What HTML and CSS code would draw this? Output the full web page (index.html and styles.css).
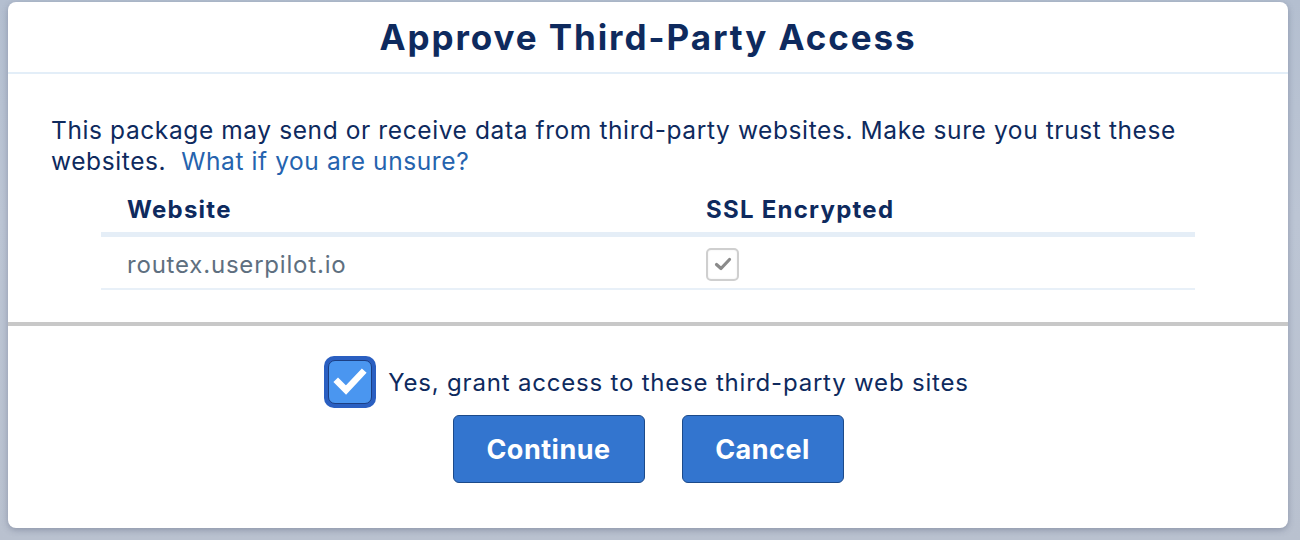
FILE: index.html
```html
<!DOCTYPE html>
<html lang="en">
<head>
<meta charset="utf-8">
<title>Approve Third-Party Access</title>
<link rel="stylesheet" href="styles.css">
</head>
<body>
<div class="page">
  <div class="dialog">
    <div class="dialog-header">
      <h1 class="title">Approve Third-Party Access</h1>
    </div>
    <div class="dialog-body">
      <p class="intro"><span>This package may send or receive data from third-party websites. Make sure you trust these websites.</span> &nbsp;<a class="link" href="#">What if you are unsure?</a></p>
      <table class="sites">
        <thead>
          <tr><th class="col-site">Website</th><th class="col-ssl">SSL Encrypted</th></tr>
        </thead>
        <tbody>
          <tr>
            <td class="col-site site-name">routex.userpilot.io</td>
            <td class="col-ssl">
              <span class="ssl-box">
                <svg width="22" height="22" viewBox="0 0 22 22"><polyline points="4.5,11.5 9,15.5 17.5,6.5" fill="none" stroke="#8a8a8a" stroke-width="3.2" stroke-linecap="round" stroke-linejoin="round"/></svg>
              </span>
            </td>
          </tr>
        </tbody>
      </table>
    </div>
    <div class="dialog-footer">
      <label class="grant">
        <span class="grant-box">
          <span class="grant-inner">
            <svg width="36" height="36" viewBox="0 0 36 36"><polyline points="6,18 14,26 30,9" fill="none" stroke="#ffffff" stroke-width="6.5" stroke-linecap="square" stroke-linejoin="miter"/></svg>
          </span>
        </span>
        <span class="grant-text">Yes, grant access to these third-party web sites</span>
      </label>
      <div class="buttons">
        <button class="btn btn-continue">Continue</button>
        <button class="btn btn-cancel">Cancel</button>
      </div>
    </div>
  </div>
</div>
</body>
</html>
```
FILE: styles.css
```css
html, body {
  margin: 0;
  padding: 0;
}
body {
  background: linear-gradient(180deg, #b4bfd0 0%, #bcc5d4 40%, #b9c1cf 100%);
  font-family: Inter, "Liberation Sans", Arial, sans-serif;
  width: 1300px;
  height: 540px;
  overflow: hidden;
}
.page {
  padding: 2px 12px 0 8px;
}
.dialog {
  width: 1280px;
  height: 526px;
  background: #ffffff;
  border-radius: 8px;
  box-shadow: 0 2px 6px rgba(60, 70, 100, 0.35);
  display: flex;
  flex-direction: column;
  overflow: hidden;
}
.dialog-header {
  height: 70px;
  border-bottom: 2px solid #e3eef8;
  display: flex;
  align-items: center;
  justify-content: center;
}
.title {
  margin: 0;
  font-size: 35px;
  font-weight: 700;
  color: #0e2a5e;
  letter-spacing: 1.9px;
  padding-top: 0;
}
.dialog-body {
  padding: 41px 0 0 43px;
  height: 207px;
  border-bottom: 4px solid #c8c8c8;
}
.intro {
  margin: 0;
  font-size: 24.5px;
  line-height: 31px;
  letter-spacing: 0.6px;
  color: #0e2a5e;
  width: 1180px;
}
.link {
  color: #2563ae;
  text-decoration: none;
}
.sites {
  margin: 0 0 0 50px;
  width: 1094px;
  border-collapse: collapse;
}
.sites th {
  text-align: left;
  vertical-align: bottom;
  font-size: 24px;
  line-height: 29px;
  letter-spacing: 1.25px;
  font-weight: 700;
  color: #0e2a5e;
  padding: 18px 0 8px 26px;
  border-bottom: 5px solid #e5eef7;
}
.sites td {
  font-size: 24px;
  letter-spacing: 0.8px;
  padding: 3px 0 0 26px;
  height: 48px;
  vertical-align: middle;
  border-bottom: 2px solid #e8f0f8;
}
.col-site {
  width: 553px;
}
.site-name {
  color: #5e6f80;
}
.ssl-box {
  display: flex;
  align-items: center;
  justify-content: center;
  width: 29px;
  height: 29px;
  border: 2px solid #cfcfcf;
  border-radius: 5px;
  box-shadow: inset 0 0 2px rgba(0,0,0,0.08);
  background: #fff;
}
.dialog-footer {
  flex: 1;
  display: flex;
  flex-direction: column;
  align-items: center;
  padding-top: 30px;
}
.grant {
  display: flex;
  align-items: center;
  gap: 12px;
  margin-left: -3px;
}
.grant-box {
  width: 52px;
  height: 52px;
  box-sizing: border-box;
  border-radius: 10px;
  background: #2a5fc1;
  padding: 4px;
}
.grant-inner {
  display: flex;
  align-items: center;
  justify-content: center;
  width: 100%;
  height: 100%;
  box-sizing: border-box;
  border: 1.5px solid #1b3f84;
  border-radius: 7px;
  background: #4a96f0;
}
.grant-text {
  font-size: 24px;
  letter-spacing: 0.8px;
  color: #0e2a5e;
}
.buttons {
  display: flex;
  gap: 37px;
  margin-top: 7px;
}
.btn {
  height: 68px;
  box-sizing: border-box;
  background: #3375cf;
  border: 1.5px solid #1c4a8a;
  border-radius: 6px;
  color: #ffffff;
  font-family: Inter, "Liberation Sans", Arial, sans-serif;
  font-size: 27px;
  letter-spacing: 0.5px;
  font-weight: 700;
  padding: 0;
}
.btn-continue {
  width: 192px;
}
.btn-cancel {
  width: 162px;
}
```
